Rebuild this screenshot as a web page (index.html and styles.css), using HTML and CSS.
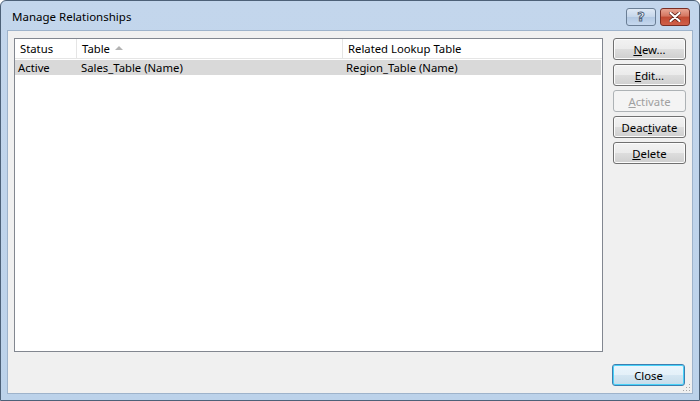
FILE: index.html
```html
<!DOCTYPE html>
<html>
<head>
    <title>Manage Relationships</title>
    <link rel="stylesheet" href="styles.css">
</head>
<body>

<div class="window">
    <div class="titlebar">
        <span class="title">Manage Relationships</span>
        <div class="caption-buttons">
            <button class="cap-btn help">?</button>
            <button class="cap-btn close-x">
                <svg width="12" height="10" viewBox="0 0 12 10">
                    <path d="M1.5 1 L10.5 9 M10.5 1 L1.5 9" stroke="#5a1d14" stroke-width="3.6" stroke-linecap="round"/>
                    <path d="M1.5 1 L10.5 9 M10.5 1 L1.5 9" stroke="#fff" stroke-width="2.2" stroke-linecap="round"/>
                </svg>
            </button>
        </div>
    </div>

    <div class="client">
        <div class="main">
            <div class="list">
                <div class="list-header">
                    <div class="col col-status">Status</div>
                    <div class="col col-table">Table <span class="sort-arrow"></span></div>
                    <div class="col col-related">Related Lookup Table</div>
                </div>
                <div class="list-row selected">
                    <div class="col col-status">Active</div>
                    <div class="col col-table">Sales_Table (Name)</div>
                    <div class="col col-related">Region_Table (Name)</div>
                </div>
            </div>

            <div class="actions">
                <button class="btn"><u>N</u>ew...</button>
                <button class="btn"><u>E</u>dit...</button>
                <button class="btn" disabled><u>A</u>ctivate</button>
                <button class="btn">Deac<u>t</u>ivate</button>
                <button class="btn"><u>D</u>elete</button>
            </div>
        </div>

        <div class="footer">
            <button class="btn default">Close</button>
            <svg class="grip" width="8" height="8" viewBox="0 0 8 8">
                <rect x="6" y="0" width="1" height="1" fill="#a6a6a6"/>
                <rect x="3" y="3" width="1" height="1" fill="#a6a6a6"/>
                <rect x="6" y="3" width="1" height="1" fill="#a6a6a6"/>
                <rect x="0" y="6" width="1" height="1" fill="#a6a6a6"/>
                <rect x="3" y="6" width="1" height="1" fill="#a6a6a6"/>
                <rect x="6" y="6" width="1" height="1" fill="#a6a6a6"/>
            </svg>
        </div>
    </div>
</div>

</body>
</html>
```

FILE: styles.css
```css
* { margin: 0; padding: 0; box-sizing: border-box; }

body {
    font-family: "Noto Sans", "Open Sans", "DejaVu Sans", sans-serif;
    font-size: 11.3px;
    color: #000;
    background: #fff;
    overflow: hidden;
}

/* Window frame (Windows 7 basic look) */
.window {
    width: 700px;
    height: 401px;
    border: 1px solid #4d6178;
    border-radius: 6px 6px 0 0;
    background: linear-gradient(to bottom, #c3d6ec 0%, #bcd2ea 100%);
    display: flex;
    flex-direction: column;
}

.titlebar {
    height: 29px;
    display: flex;
    align-items: center;
    justify-content: space-between;
    padding: 0 9px 0 11px;
}

.title {
    font-size: 11.5px;
    padding-top: 2px;
}

.caption-buttons {
    display: flex;
    gap: 4px;
    padding-top: 2px;
}

.cap-btn {
    width: 30px;
    height: 18px;
    border: 1px solid #6a7e95;
    border-radius: 3px;
    display: flex;
    align-items: center;
    justify-content: center;
    font-family: "DejaVu Sans", sans-serif;
    font-weight: bold;
    font-size: 13px;
}

.cap-btn.help {
    background: linear-gradient(to bottom, #dfe9f5 0%, #c5d6ea 50%, #b2c8e2 51%, #c6d8ee 100%);
    color: #fff;
    -webkit-text-stroke: 1px #4e627a;
}

.cap-btn.close-x {
    border-color: #7a2e24;
    background: linear-gradient(to bottom, #e8a593 0%, #d47560 45%, #c14a32 50%, #d0604a 100%);
}

/* Client area */
.client {
    flex: 1;
    margin: 0 6px 6px 6px;
    border: 1px solid #9eb3cb;
    background: #f0f0f0;
    display: flex;
    flex-direction: column;
    padding: 7px 6px 7px 6px;
    position: relative;
}

.main {
    flex: 1;
    display: flex;
    gap: 10px;
}

.list {
    flex: 1;
    background: #fff;
    border: 1px solid #828790;
}

.list-header {
    display: flex;
    height: 20px;
    align-items: center;
    border-bottom: 1px solid #e5e5e5;
}

.list-header .col {
    height: 100%;
    display: flex;
    align-items: center;
    padding-left: 5px;
    border-right: 1px solid #e5e5e5;
}

.list-header .col-related {
    border-right: none;
}

.col-status { width: 62px; }
.col-table { width: 266px; }
.col-related { flex: 1; }

.sort-arrow {
    display: inline-block;
    width: 0;
    height: 0;
    margin-left: 5px;
    margin-top: -2px;
    border-left: 4px solid transparent;
    border-right: 4px solid transparent;
    border-bottom: 4px solid #b3b3b3;
}

.list-row {
    display: flex;
    height: 15px;
    margin-top: 1px;
    align-items: center;
    margin-right: 1px;
}

.list-row .col {
    padding-left: 3px;
}

.list-row .col-table { padding-left: 4px; }

.list-row.selected {
    background: #d9d9d9;
}

/* Buttons */
.actions {
    width: 73px;
    display: flex;
    flex-direction: column;
    gap: 4px;
}

.btn {
    width: 73px;
    height: 22px;
    font-family: inherit;
    font-size: 11.3px;
    color: #000;
    border: 1px solid #707070;
    border-radius: 3px;
    background: linear-gradient(to bottom, #f2f2f2 0%, #ebebeb 50%, #dddddd 51%, #cfcfcf 100%);
    box-shadow: inset 0 0 0 1px #fcfcfc;
    display: flex;
    align-items: center;
    justify-content: center;
}

.btn:disabled {
    color: #a0a0a0;
    border-color: #adb2b5;
    background: #f4f4f4;
    box-shadow: none;
}

.btn.default {
    border-color: #3c7fb1;
    box-shadow: inset 0 0 0 1px #48d1f8;
    background: linear-gradient(to bottom, #eaf6fd 0%, #e4f0f8 50%, #d4e6f2 51%, #c6dcea 100%);
}

.footer {
    height: 22px;
    margin-top: 12px;
    display: flex;
    justify-content: flex-end;
    padding-right: 1px;
}

.grip {
    position: absolute;
    right: 1px;
    bottom: 1px;
}
```
